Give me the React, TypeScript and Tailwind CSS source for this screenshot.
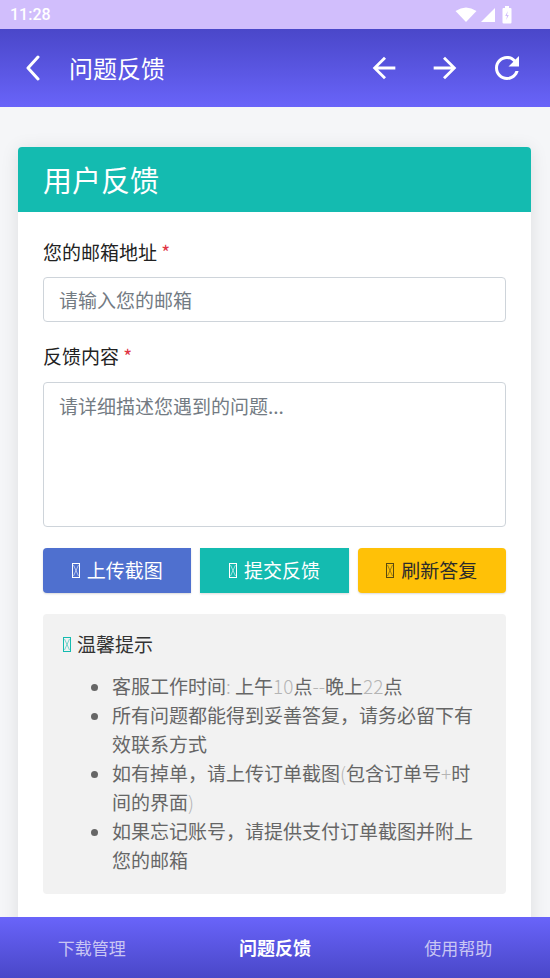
import React from "react";

const Tofu = ({ color, h = 15 }: { color: string; h?: number }) => (
  <svg width="8" height={h} viewBox={`0 0 8 ${h}`} className="inline-block align-[-2px]" aria-hidden>
    <rect x="0.5" y="0.5" width="7" height={h - 1} fill="none" stroke={color} strokeWidth="1" />
    <path d={`M1.5 2 L6.5 ${h - 2} M6.5 2 L1.5 ${h - 2}`} stroke={color} strokeWidth="0.8" opacity="0.7" />
  </svg>
);

const Num = ({ children }: { children: React.ReactNode }) => (
  <span className="text-[#b4b4b4] font-light">{children}</span>
);

export default function App() {
  const font = { fontFamily: '"Noto Sans CJK SC", "Noto Sans", sans-serif' };
  return (
    <div className="w-[550px] h-[978px] flex flex-col overflow-hidden bg-[#f5f6f8]" style={font}>
      {/* status bar */}
      <div className="h-[29px] bg-[#d1befc] flex items-center justify-between pl-[10px] pr-[38px] shrink-0">
        <span className="text-white text-[16px] font-medium" style={{ fontFamily: "Roboto, sans-serif" }}>11:28</span>
        <div className="flex items-center gap-[3px]">
          <svg width="22" height="16" viewBox="0 0 22 16">
            <path d="M11 15 L0.5 4 Q11 -3 21.5 4 Z" fill="white" />
          </svg>
          <svg width="16" height="16" viewBox="0 0 16 16">
            <path d="M15 1 L15 15 L1 15 Z" fill="white" />
          </svg>
          <svg width="10" height="18" viewBox="0 0 10 18" className="ml-[3px]">
            <rect x="3" y="0" width="4" height="2" fill="white" />
            <rect x="0.5" y="2" width="9" height="15.5" rx="1" fill="white" />
            <path d="M5.8 5 L3.2 10 L5 10 L4.2 14 L6.8 9 L5 9 Z" fill="#d1befc" />
          </svg>
        </div>
      </div>
      {/* app bar */}
      <div className="h-[78px] shrink-0 bg-gradient-to-b from-[#4a47c9] to-[#6964f9] flex items-center pl-[25px] pr-[25px]">
        <svg width="16" height="26" viewBox="0 0 16 26" className="mr-[28px]">
          <path d="M13 2 L3 13 L13 24" fill="none" stroke="white" strokeWidth="3" strokeLinecap="round" strokeLinejoin="round" />
        </svg>
        <span className="text-white text-[24px] flex-1 leading-none">问题反馈</span>
        <div className="flex items-center gap-[27px]">
          <svg width="34" height="34" viewBox="0 0 24 24" fill="white">
            <path d="M20 11H7.83l5.59-5.59L12 4l-8 8 8 8 1.41-1.41L7.83 13H20v-2z" />
          </svg>
          <svg width="34" height="34" viewBox="0 0 24 24" fill="white">
            <path d="M12 4l-1.41 1.41L16.17 11H4v2h12.17l-5.58 5.59L12 20l8-8z" />
          </svg>
          <svg width="36" height="36" viewBox="0 0 24 24" fill="white">
            <path d="M17.65 6.35C16.2 4.9 14.21 4 12 4c-4.42 0-7.990 3.58-7.99 8s3.57 8 7.99 8c3.73 0 6.84-2.55 7.73-6h-2.08c-.82 2.33-3.04 4-5.65 4-3.31 0-6-2.69-6-6s2.69-6 6-6c1.66 0 3.14.69 4.22 1.78L13 11h7V4l-2.35 2.35z" />
          </svg>
        </div>
      </div>
      {/* content */}
      <div className="flex-1 overflow-hidden pt-[40px] px-[18px] pr-[19px]">
        <div className="bg-white rounded-[4px] shadow-[0_2px_18px_rgba(0,0,0,0.10)] h-[900px]">
          <div className="h-[65px] bg-[#14bbb0] rounded-t-[4px] flex items-center px-[25px]">
            <span className="text-white text-[29px] leading-none">用户反馈</span>
          </div>
          <div className="px-[25px] pt-[26px]">
            <div className="text-[19px] leading-[28px] text-[#222]">
              您的邮箱地址 <span className="text-[#e03545]">*</span>
            </div>
            <input
              className="mt-[11px] w-full h-[45px] border border-[#ced4da] rounded-[4px] px-[15px] text-[19px] outline-none placeholder:text-[#737b83]"
              placeholder="请输入您的邮箱"
              style={font}
            />
            <div className="mt-[20px] text-[19px] leading-[28px] text-[#222]">
              反馈内容 <span className="text-[#e03545]">*</span>
            </div>
            <textarea
              className="mt-[12px] block w-full h-[145px] border border-[#ced4da] rounded-[4px] px-[15px] py-[9px] text-[19px] leading-[27px] outline-none resize-none placeholder:text-[#737b83]"
              placeholder="请详细描述您遇到的问题..."
              style={font}
            />
            <div className="mt-[21px] grid grid-cols-3 gap-[9px] h-[45px]">
              <div className="bg-[#4f70cf] rounded-l-[4px] flex items-center justify-center gap-[7px] text-white text-[19px] shadow-[0_1px_2px_rgba(0,0,0,0.15)]">
                <Tofu color="#ffffff" /> <span>上传截图</span>
              </div>
              <div className="bg-[#14bbb0] flex items-center justify-center gap-[7px] text-white text-[19px] shadow-[0_1px_2px_rgba(0,0,0,0.15)]">
                <Tofu color="#ffffff" /> <span>提交反馈</span>
              </div>
              <div className="bg-[#ffc107] rounded-[4px] flex items-center justify-center gap-[7px] text-[#2b2b2b] text-[19px] shadow-[0_1px_2px_rgba(0,0,0,0.15)]">
                <Tofu color="#5a4a10" /> <span>刷新答复</span>
              </div>
            </div>
            <div className="mt-[21px] bg-[#f2f2f2] rounded-[4px] pl-[20px] pr-[22px] pt-[16px] pb-[20px]">
              <div className="flex items-center gap-[6px] text-[19px] leading-[28px] text-[#333]">
                <Tofu color="#14bbb0" /> <span>温馨提示</span>
              </div>
              <ul className="mt-[13px] list-disc pl-[49px] text-[19px] leading-[29px] text-[#666] marker:text-[#666]">
                <li>客服工作时间<Num>:</Num> 上午<Num>10</Num>点<Num>--</Num>晚上<Num>22</Num>点</li>
                <li>所有问题都能得到妥善答复，请务必留下有效联系方式</li>
                <li>如有掉单，请上传订单截图<Num>(</Num>包含订单号<Num>+</Num>时间的界面<Num>)</Num></li>
                <li>如果忘记账号，请提供支付订单截图并附上您的邮箱</li>
              </ul>
            </div>
          </div>
        </div>
      </div>
      {/* bottom nav */}
      <div className="h-[61px] shrink-0 bg-gradient-to-b from-[#6964fa] to-[#4a47c8] grid grid-cols-3 items-center text-center">
        <span className="text-[17px] text-[#c9c6f3]">下载管理</span>
        <span className="text-[18px] font-bold text-white">问题反馈</span>
        <span className="text-[17px] text-[#c9c6f3]">使用帮助</span>
      </div>
    </div>
  );
}
